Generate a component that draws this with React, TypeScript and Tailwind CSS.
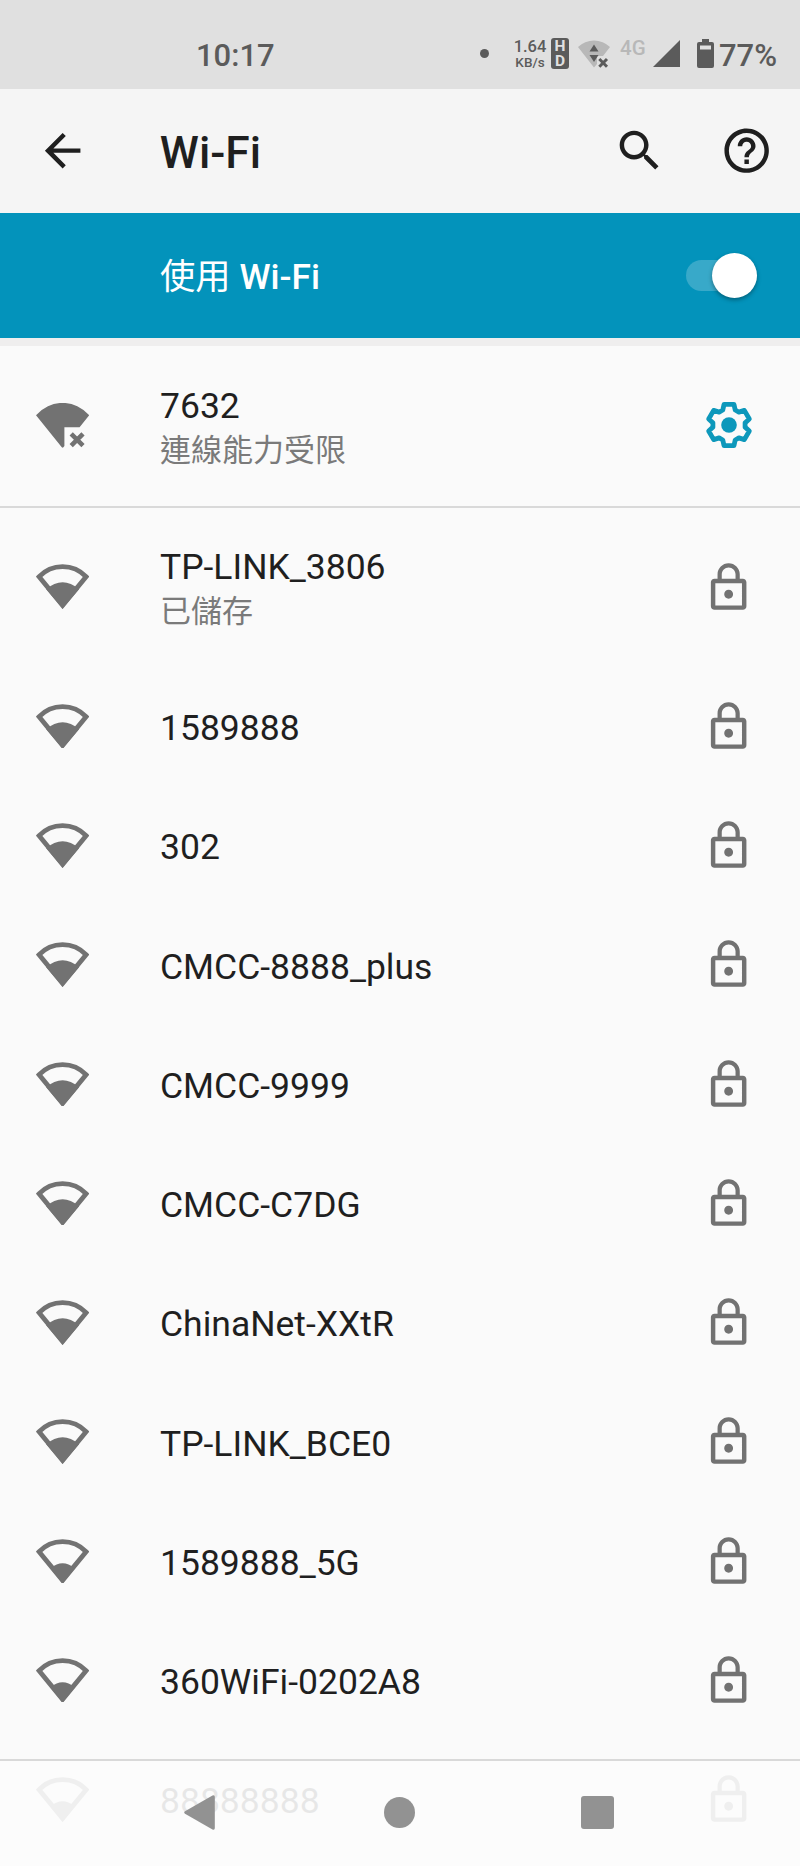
import React from 'react';

type Level = 'full' | 'medium' | 'weak';

interface Network {
  name: string;
  level: Level;
  status?: string;
}

const WifiIcon = ({ level }: { level: Level }) => (
  <svg width="53.2" height="44.6" viewBox="0 0 53.2 44.6" className="mb-[1px] fill-[#727272]">
    <path
      d="M3.1 12.7A32.4 32.4 0 0 1 50.1 12.7L26.6 41.4Z"
      className="fill-none stroke-[#727272]"
      strokeWidth="4.8"
    />
    {level === 'medium' && <path d="M10.2 25.2Q26.6 11.2 43 25.2L26.6 44.5Z" />}
    {level === 'weak' && <path d="M14.6 29.4Q26.6 19.2 38.6 29.4L26.6 44.5Z" />}
  </svg>
);

// 已連線但無網際網路
const WifiLimitedIcon = () => (
  <svg width="53.2" height="44.6" viewBox="0 0 53.2 44.6" className="mb-[1px] fill-[#727272]">
    <path d="M0 12.3A34.7 34.7 0 0 1 53.2 12.3L43.6 24.2H28.4V43L27.4 44.3Q26.6 45 25.8 44.3Z" />
    <path d="M35.2 30.8L47 42.6M47 30.8L35.2 42.6" className="stroke-[#727272]" strokeWidth="4.6" />
  </svg>
);

const LockIcon = () => (
  <svg width="53.3" height="53.3" viewBox="0 0 24 24" className="fill-[#727272]">
    <path d="M12 17c1.1 0 2-.9 2-2s-.9-2-2-2-2 .9-2 2 .9 2 2 2zM18.4 8H17V6c0-2.76-2.24-5-5-5S7 3.24 7 6v2H5.6C4.7 8 4 8.7 4 9.6v10.8c0 .9.7 1.6 1.6 1.6h12.8c.9 0 1.6-.7 1.6-1.6V9.6c0-.9-.7-1.6-1.6-1.6zM8.9 6c0-1.71 1.39-3.1 3.1-3.1s3.1 1.39 3.1 3.1v2H8.9V6zM18 20H6V10h12v10z" />
  </svg>
);

// 六齒齒輪的輪廓
const gearPoints = [0, 60, 120, 180, 240, 300]
  .flatMap((deg) => {
    const a = (deg * Math.PI) / 180;
    return [[-6.2, -15], [-5, -20.6], [5, -20.6], [6.2, -15]].map(
      ([x, y]) => `${(x * Math.cos(a) - y * Math.sin(a)).toFixed(2)},${(x * Math.sin(a) + y * Math.cos(a)).toFixed(2)}`
    );
  })
  .join(' ');

const GearIcon = () => (
  <svg width="52" height="52" viewBox="-26 -26 52 52" className="mb-[1px] fill-[#0d98bb]">
    <polygon points={gearPoints} className="fill-none stroke-[#0d98bb]" strokeWidth="4.8" strokeLinejoin="round" />
    <circle r="7.8" />
  </svg>
);

const StatusBar = () => (
  <div className="flex h-[89px] items-center bg-[#e0e0e0] pt-[18px] font-medium text-[#5b5b5b]">
    <div className="mt-[3px] ml-[196px] w-[284px] text-[31px] leading-none">10:17</div>
    <div className="size-[9px] rounded-full bg-[#5b5b5b]" />
    <div className="mt-[2px] ml-[25px] flex w-[32px] flex-col items-center whitespace-nowrap">
      <span className="text-[16.5px] leading-[16px]">1.64</span>
      <span className="text-[13.5px] leading-[15px]">KB/s</span>
    </div>
    <div className="ml-[5px] flex h-[31px] w-[18px] flex-col items-center justify-center rounded-[3px] bg-[#5b5b5b] text-[15.5px] leading-[14.5px] font-bold text-[#e0e0e0]">
      <span>H</span>
      <span>D</span>
    </div>
    <svg width="32" height="28" viewBox="0 0 32 28" className="ml-[9px]">
      <path d="M0 7A23 23 0 0 1 32 7L25 16H19V24L16 27.5Z" className="fill-[#b8b8b8]" />
      <path d="M16 4.5L20.5 11.5H11.5ZM16 22L11.5 15H20.5Z" className="fill-[#5b5b5b]" />
      <path d="M21.3 19L29 26.7M29 19L21.3 26.7" className="stroke-[#5b5b5b]" strokeWidth="3" />
    </svg>
    <div className="mb-[10px] ml-[10px] w-[32px] text-[20.5px] leading-none text-[#b8b8b8]">4G</div>
    <svg width="27" height="27" viewBox="0 0 27 27" className="ml-[1px] fill-[#5b5b5b]">
      <path d="M27 0V27H0Z" />
    </svg>
    <svg width="17" height="30" viewBox="0 0 17 30" className="ml-[17px] fill-[#5b5b5b]">
      <path
        fillRule="evenodd"
        d="M5 0H12V3H15Q17 3 17 5V27Q17 29 15 29H2Q0 29 0 27V5Q0 3 2 3H5ZM3 6.5V10.5H14V6.5Z"
      />
    </svg>
    <div className="mt-[3px] ml-[5px] text-[31px] leading-none">77%</div>
  </div>
);

const AppBar = () => (
  <header className="flex h-[124px] items-center bg-[#f5f5f5] pr-[27px] pl-[36px] text-[#1f1f1f]">
    <svg width="53.3" height="53.3" viewBox="0 0 24 24" className="fill-current">
      <path d="M20 11H7.83l5.59-5.59L12 4l-8 8 8 8 1.41-1.41L7.83 13H20v-2z" />
    </svg>
    <h1 className="mt-[4px] ml-[70.5px] flex-1 text-[44.4px] leading-none font-medium">Wi-Fi</h1>
    <svg width="53.3" height="53.3" viewBox="0 0 24 24" className="mr-[53.5px] fill-current">
      <path d="M15.5 14h-.79l-.28-.27C15.41 12.59 16 11.11 16 9.5 16 5.91 13.09 3 9.5 3S3 5.91 3 9.5 5.91 16 9.5 16c1.61 0 3.09-.59 4.23-1.57l.27.28v.79l5 4.99L20.49 19l-4.99-5zm-6 0C7.01 14 5 11.99 5 9.5S7.01 5 9.5 5 14 7.01 14 9.5 11.99 14 9.5 14z" />
    </svg>
    <svg width="53.3" height="53.3" viewBox="0 0 24 24" className="fill-current">
      <path d="M11 18h2v-2h-2v2zm1-16C6.48 2 2 6.48 2 12s4.48 10 10 10 10-4.48 10-10S17.52 2 12 2zm0 18c-4.41 0-8-3.59-8-8s3.59-8 8-8 8 3.59 8 8-3.59 8-8 8zm0-14c-2.21 0-4 1.79-4 4h2c0-1.1.9-2 2-2s2 .9 2 2c0 2-3 1.75-3 5h2c0-2.25 3-2.5 3-5 0-2.21-1.79-4-4-4z" />
    </svg>
  </header>
);

const SwitchBar = () => (
  <div className="flex h-[125px] items-center justify-between bg-[#0393bb] pr-[43px] pl-[160px] text-white">
    <span className="mt-[4px] text-[35.3px] leading-none font-medium">
      <span className="font-normal">使用</span> Wi-Fi
    </span>
    <div className="flex h-[31px] w-[71px] items-center justify-end rounded-full bg-[#38a9c9]">
      <div className="size-[45px] shrink-0 rounded-full bg-white shadow-[0_2px_4px_rgba(0,0,0,0.35)]" />
    </div>
  </div>
);

const NetworkRow = ({ name, level, status }: Network) => (
  <li className={`flex items-center pr-[45px] pl-[35.5px] ${status ? 'h-[159.5px]' : 'h-[119.25px]'}`}>
    {level === 'full' ? <WifiLimitedIcon /> : <WifiIcon level={level} />}
    <div className={`ml-[71.3px] flex-1 ${status ? 'pt-[7px]' : 'pt-[3px]'}`}>
      <div className="text-[35.5px] leading-[42px] text-[#1f1f1f]">{name}</div>
      {status && <div className="text-[31px] leading-[47px] text-[#7a7a7a]">{status}</div>}
    </div>
    {level === 'full' ? <GearIcon /> : <LockIcon />}
  </li>
);

const networks: Network[] = [
  { name: 'TP-LINK_3806', level: 'medium', status: '已儲存' },
  { name: '1589888', level: 'medium' },
  { name: '302', level: 'medium' },
  { name: 'CMCC-8888_plus', level: 'medium' },
  { name: 'CMCC-9999', level: 'medium' },
  { name: 'CMCC-C7DG', level: 'medium' },
  { name: 'ChinaNet-XXtR', level: 'medium' },
  { name: 'TP-LINK_BCE0', level: 'medium' },
  { name: '1589888_5G', level: 'weak' },
  { name: '360WiFi-0202A8', level: 'weak' },
  { name: '88888888', level: 'weak' },
];

// 底部導覽列，半透明覆蓋在清單上
const NavBar = () => (
  <nav className="absolute inset-x-0 bottom-0 flex h-[107px] items-center justify-between border-t-2 border-[#d9d9d9] bg-[#fcfcfc]/91 pr-[186px] pb-[2px] pl-[184px]">
    <svg width="31" height="35" viewBox="0 0 31 35" className="fill-[#929292]">
      <path d="M1 16.3L28.5 .4Q30.8 -.4 30.8 2V33Q30.8 35.4 28.5 34.6L1 18.7Q-.6 17.5 1 16.3Z" />
    </svg>
    <div className="ml-[3px] size-[31px] rounded-full bg-[#929292]" />
    <div className="size-[33px] rounded-[3px] bg-[#929292]" />
  </nav>
);

const App = () => {
  return (
    <div className="relative h-[1866px] w-[800px] overflow-hidden bg-[#fafafa] font-[Roboto,'Noto_Sans_CJK_TC',sans-serif]">
      <StatusBar />
      <AppBar />
      <SwitchBar />
      <div className="h-[8px] bg-[#efeeee]" />
      <ul className="border-b-2 border-[#d9d9d9]">
        <NetworkRow name="7632" level="full" status="連線能力受限" />
      </ul>
      <ul>
        {networks.map((item) => (
          <NetworkRow key={item.name} {...item} />
        ))}
      </ul>
      <NavBar />
    </div>
  );
};

export default App;
